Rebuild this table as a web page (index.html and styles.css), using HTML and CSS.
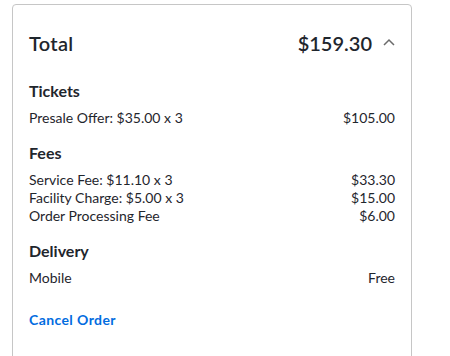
FILE: index.html
```html
<!DOCTYPE html>
<html lang="en">
<head>
    <meta charset="UTF-8">
    <meta name="viewport" content="width=device-width, initial-scale=1.0">
    <title>Order Summary</title>
    <link rel="stylesheet" href="styles.css">
</head>
<body>
    <div class="card">
        <div class="total-row">
            <span class="total-label">Total</span>
            <span class="total-amount">
                $159.30
                <svg class="chevron" width="12" height="8" viewBox="0 0 12 8">
                    <path d="M1 7 L6 2 L11 7" fill="none" stroke="#6b6b6b" stroke-width="1.5"/>
                </svg>
            </span>
        </div>

        <div class="section">
            <h2 class="section-title">Tickets</h2>
            <div class="line"><span>Presale Offer: $35.00 x 3</span><span>$105.00</span></div>
        </div>

        <div class="section">
            <h2 class="section-title">Fees</h2>
            <div class="line"><span>Service Fee: $11.10 x 3</span><span>$33.30</span></div>
            <div class="line"><span>Facility Charge: $5.00 x 3</span><span>$15.00</span></div>
            <div class="line"><span>Order Processing Fee</span><span>$6.00</span></div>
        </div>

        <div class="section">
            <h2 class="section-title">Delivery</h2>
            <div class="line"><span>Mobile</span><span>Free</span></div>
        </div>

        <a class="cancel-link" href="#">Cancel Order</a>
    </div>
</body>
</html>
```

FILE: styles.css
```css
body {
    margin: 0;
    font-family: Lato, "Open Sans", sans-serif;
    color: #1f262d;
    background: white;
}

.card {
    margin: 4px 0 0 12px;
    width: 400px;
    box-sizing: border-box;
    border: 1px solid #c6c6c6;
    border-radius: 4px;
    padding: 24px 16px 40px 16px;
}

.total-row {
    display: flex;
    justify-content: space-between;
    align-items: center;
    height: 28px;
    font-size: 20px;
    font-weight: 600;
}

.total-label {
    letter-spacing: 0.3px;
}

.total-amount {
    display: flex;
    align-items: center;
    gap: 11px;
}

.chevron {
    margin-top: -2px;
}

.section {
    margin-top: 16px;
}

.total-row + .section {
    margin-top: 24px;
}

.section-title {
    margin: 0 0 8px 0;
    font-size: 16px;
    font-weight: 700;
    line-height: 20px;
}

.line {
    display: flex;
    justify-content: space-between;
    font-size: 14px;
    line-height: 18px;
}

.cancel-link {
    display: block;
    margin-top: 24px;
    line-height: 18px;
    font-size: 14px;
    font-weight: 700;
    letter-spacing: 0.4px;
    color: #026cdf;
    text-decoration: none;
}
```
